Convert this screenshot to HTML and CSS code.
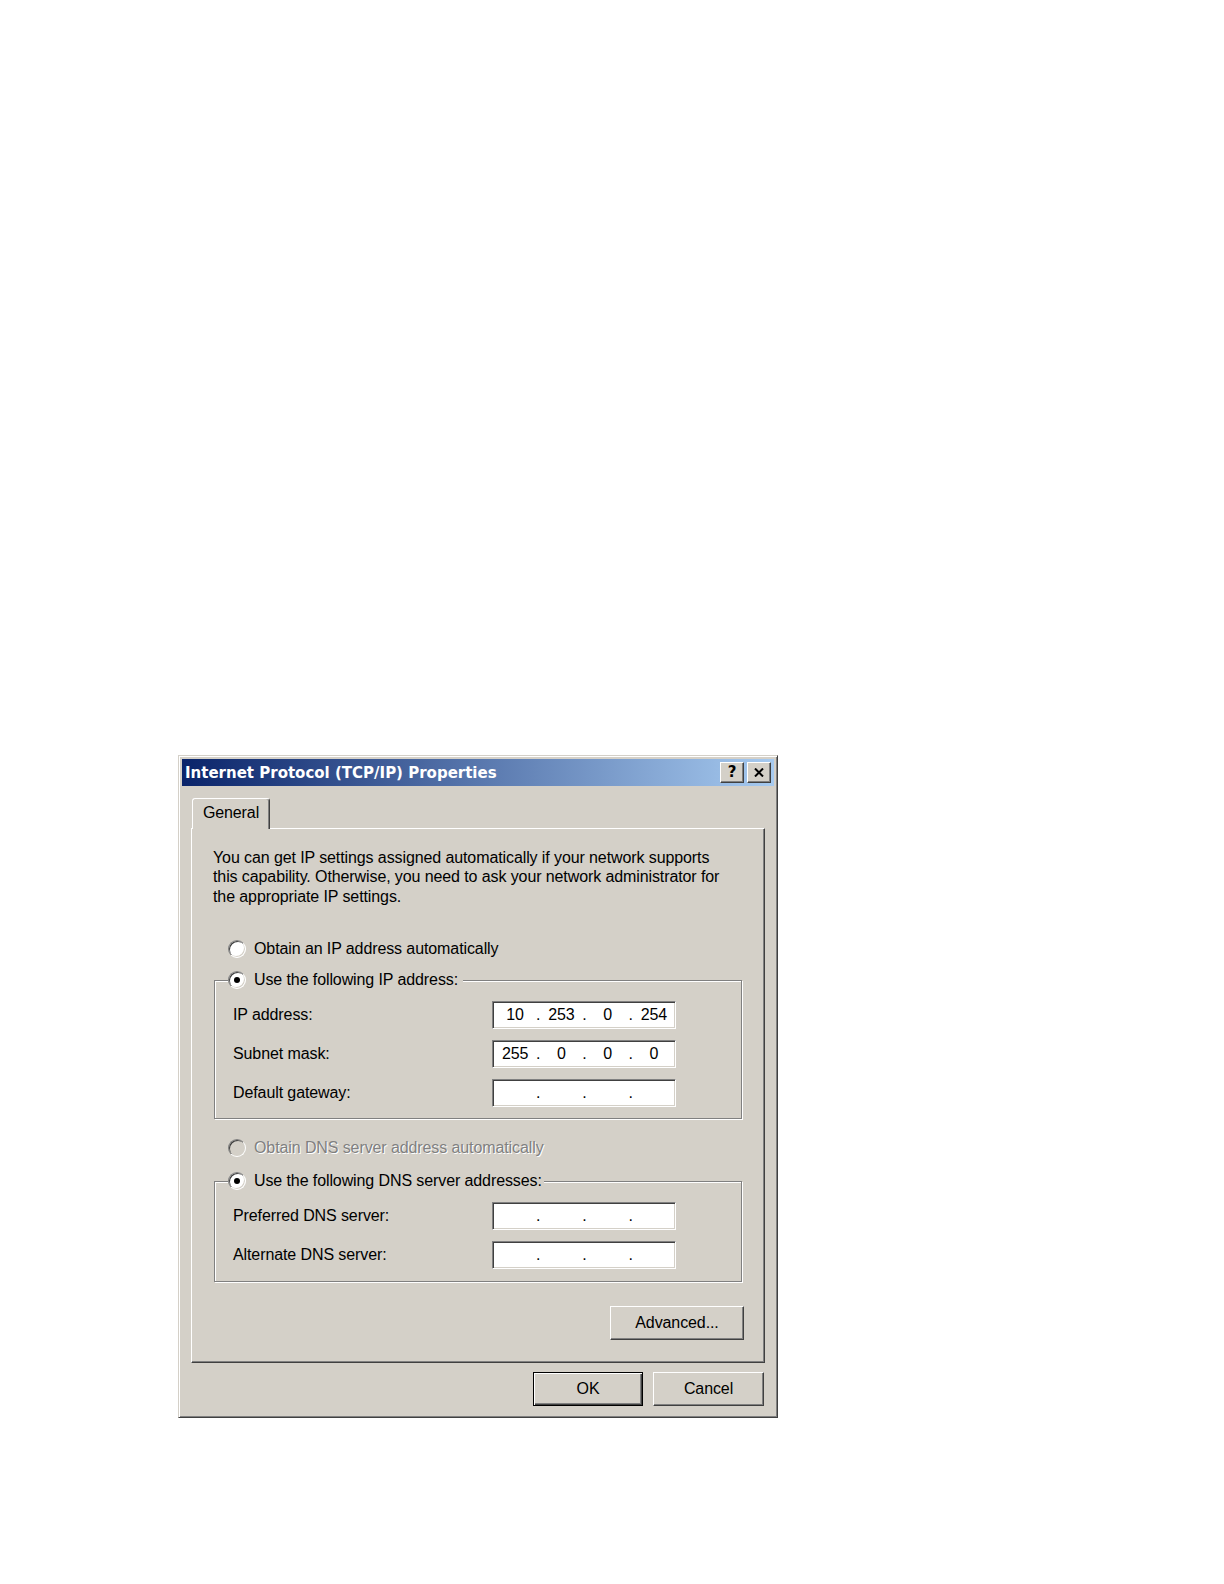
FILE: index.html
```html
<!DOCTYPE html>
<html lang="en">
<head>
  <meta charset="UTF-8">
  <title>Internet Protocol (TCP/IP) Properties</title>
  <link rel="stylesheet" href="styles.css">
</head>
<body>
<div class="page">
  <div class="dialog">
    <div class="titlebar">
      <span class="title">Internet Protocol (TCP/IP) Properties</span>
      <div class="caption-buttons">
        <button class="cap-btn help">?</button>
        <button class="cap-btn close">
          <svg width="10" height="9" viewBox="0 0 10 9"><path d="M1 0.5 L9 8.5 M9 0.5 L1 8.5" stroke="#000" stroke-width="2"/></svg>
        </button>
      </div>
    </div>

    <div class="tabs">
      <div class="tab active">General</div>
    </div>

    <div class="panel">
      <p class="intro">You can get IP settings assigned automatically if your network supports<br>this capability. Otherwise, you need to ask your network administrator for<br>the appropriate IP settings.</p>

      <div class="radio first"><span class="circle"></span>Obtain an IP address automatically</div>

      <fieldset class="group ip-group">
        <legend><div class="radio"><span class="circle checked"></span>Use the following IP address:</div></legend>
        <div class="rows">
          <div class="row">
            <span class="label">IP address:</span>
            <div class="ip"><span>10</span><i>.</i><span>253</span><i>.</i><span>0</span><i>.</i><span>254</span></div>
          </div>
          <div class="row">
            <span class="label">Subnet mask:</span>
            <div class="ip"><span>255</span><i>.</i><span>0</span><i>.</i><span>0</span><i>.</i><span>0</span></div>
          </div>
          <div class="row">
            <span class="label">Default gateway:</span>
            <div class="ip"><span></span><i>.</i><span></span><i>.</i><span></span><i>.</i><span></span></div>
          </div>
        </div>
      </fieldset>

      <div class="radio disabled"><span class="circle"></span>Obtain DNS server address automatically</div>

      <fieldset class="group dns-group">
        <legend><div class="radio"><span class="circle checked"></span>Use the following DNS server addresses:</div></legend>
        <div class="rows">
          <div class="row">
            <span class="label">Preferred DNS server:</span>
            <div class="ip"><span></span><i>.</i><span></span><i>.</i><span></span><i>.</i><span></span></div>
          </div>
          <div class="row">
            <span class="label">Alternate DNS server:</span>
            <div class="ip"><span></span><i>.</i><span></span><i>.</i><span></span><i>.</i><span></span></div>
          </div>
        </div>
      </fieldset>

      <div class="advanced-row">
        <button class="btn advanced">Advanced...</button>
      </div>
    </div>

    <div class="footer">
      <button class="btn ok default">OK</button>
      <button class="btn cancel">Cancel</button>
    </div>
  </div>
</div>
</body>
</html>
```

FILE: styles.css
```css
:root {
  --face: #d4d0c8;
  --shadow: #808080;
  --dark: #404040;
  --light: #ffffff;
}
* {
  box-sizing: border-box;
}
body {
  margin: 0;
  background: #fff;
  font-family: 'Liberation Sans', Arial, sans-serif;
  font-size: 16px;
  letter-spacing: -0.1px;
  color: #000;
}
.page {
  padding: 755px 0 0 178px;
}
.dialog {
  width: 600px;
  background: var(--face);
  border: 1px solid;
  border-color: var(--face) var(--dark) var(--dark) var(--face);
  box-shadow: inset 1px 1px 0 var(--light), inset -1px -1px 0 var(--shadow);
  padding: 3px 3px 0 3px;
}
.titlebar {
  height: 27px;
  display: flex;
  align-items: center;
  justify-content: space-between;
  padding: 0 3px 0 3px;
  background: linear-gradient(to right, #0a246a, #a6caf0);
}
.title {
  color: #fff;
  font-family: 'DejaVu Sans', Verdana, sans-serif;
  font-weight: bold;
  font-size: 15px;
  letter-spacing: 0;
}
.caption-buttons {
  display: flex;
  gap: 3px;
}
.cap-btn {
  width: 24px;
  height: 21px;
  padding: 0;
  margin: 0;
  background: var(--face);
  border: 1px solid;
  border-color: var(--light) var(--dark) var(--dark) var(--light);
  box-shadow: inset -1px -1px 0 var(--shadow);
  display: flex;
  align-items: center;
  justify-content: center;
}
.help {
  font-family: 'DejaVu Sans', sans-serif;
  font-weight: bold;
  font-size: 15px;
  line-height: 1;
}
.tabs {
  display: flex;
  margin: 12px 9px 0 9px;
  height: 30px;
}
.tab {
  position: relative;
  z-index: 1;
  margin-left: 1px;
  width: 78px;
  height: 31px;
  background: var(--face);
  border: 1px solid;
  border-bottom: none;
  border-color: var(--light) var(--dark) transparent var(--light);
  border-radius: 3px 3px 0 0;
  box-shadow: inset -1px 0 0 var(--shadow);
  text-align: center;
  line-height: 27px;
}
.panel {
  margin: 0 9px;
  height: 535px;
  border: 1px solid;
  border-color: var(--light) var(--dark) var(--dark) var(--light);
  box-shadow: inset -1px -1px 0 var(--shadow);
  padding: 18.5px 22px 0 21px;
}
.intro {
  margin: 0;
  line-height: 19.5px;
}
.radio {
  display: flex;
  align-items: center;
  height: 22px;
  gap: 8px;
  white-space: nowrap;
}
.panel > .radio {
  margin-left: 15px;
}
.radio.first {
  margin-top: 32px;
}
.circle {
  width: 18px;
  height: 18px;
  border-radius: 50%;
  background: #fff;
  border: 1px solid;
  border-color: var(--shadow) var(--light) var(--light) var(--shadow);
  box-shadow: inset 1px 1px 0 var(--dark), inset -1px -1px 0 var(--face);
  display: flex;
  align-items: center;
  justify-content: center;
  flex-shrink: 0;
}
.circle.checked::after {
  content: '';
  width: 6px;
  height: 6px;
  border-radius: 50%;
  background: #000;
}
.radio.disabled {
  color: var(--shadow);
  text-shadow: 1px 1px 0 var(--light);
  margin-top: 18px;
}
.radio.disabled .circle {
  background: var(--face);
}
.group {
  margin: 0 0 0 1px;
  padding: 0;
  min-width: 0;
  border: 1px solid var(--shadow);
  box-shadow: inset 1px 1px 0 var(--light), 1px 1px 0 var(--light);
}
.ip-group {
  margin-top: 9px;
}
.dns-group {
  margin-top: 11px;
}
.group legend {
  margin-left: 13px;
  padding: 0 5px 0 0;
  background: var(--face);
}
.dns-group legend {
  padding-right: 2px;
}
.rows {
  display: flex;
  flex-direction: column;
  gap: 11px;
  padding: 10px 0 11px 18px;
}
.dns-group .rows {
  padding-bottom: 12px;
}
.row {
  display: flex;
  align-items: center;
  height: 28px;
}
.label {
  width: 259px;
}
.ip {
  width: 184px;
  height: 28px;
  background: #fff;
  border: 1px solid;
  border-color: var(--shadow) var(--light) var(--light) var(--shadow);
  box-shadow: inset 1px 1px 0 var(--dark), inset -1px -1px 0 var(--face);
  display: grid;
  grid-template-columns: 1fr 6px 1fr 6px 1fr 6px 1fr;
  align-items: center;
  padding: 0 1px 0 2px;
}
.ip span {
  text-align: center;
}
.ip i {
  font-style: normal;
  text-align: center;
}
.advanced-row {
  display: flex;
  justify-content: flex-end;
  margin: 24px -2px 0 0;
}
.btn {
  height: 34px;
  padding: 0;
  font-family: 'Liberation Sans', Arial, sans-serif;
  font-size: 16px;
  letter-spacing: -0.1px;
  color: #000;
  background: var(--face);
  border: 1px solid;
  border-color: var(--light) var(--dark) var(--dark) var(--light);
  box-shadow: inset -1px -1px 0 var(--shadow);
}
.advanced {
  width: 134px;
}
.btn.default {
  border: 1px solid #000;
  box-shadow: inset 1px 1px 0 var(--light), inset -1px -1px 0 var(--dark), inset -2px -2px 0 var(--shadow);
}
.footer {
  display: flex;
  justify-content: flex-end;
  gap: 10px;
  padding: 9px 10px 11px 0;
}
.ok {
  width: 110px;
}
.cancel {
  width: 111px;
}
```
